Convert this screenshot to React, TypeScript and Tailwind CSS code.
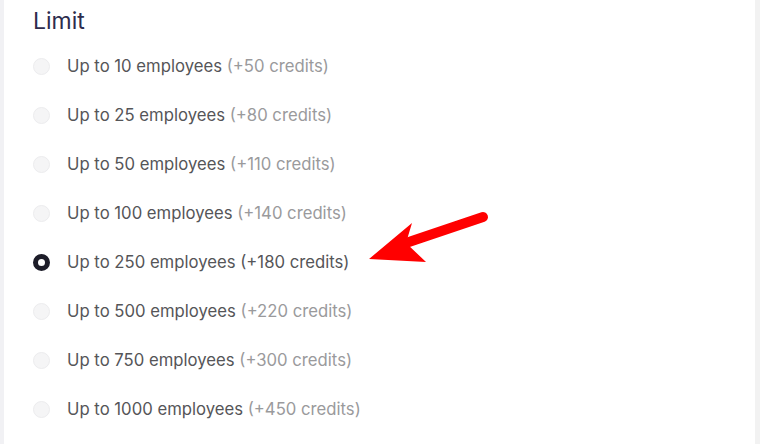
import React from "react";

const options = [
  { n: "10", c: "+50" },
  { n: "25", c: "+80" },
  { n: "50", c: "+110" },
  { n: "100", c: "+140" },
  { n: "250", c: "+180" },
  { n: "500", c: "+220" },
  { n: "750", c: "+300" },
  { n: "1000", c: "+450" },
];

const selected = "250";

export default function App() {
  return (
    <div className="relative flex h-[444px] w-[760px] overflow-hidden bg-white [font-family:Inter,'Noto_Sans',sans-serif]">
      <div className="w-[4px] shrink-0 bg-[#f1f1f4]" />
      <div className="flex-1 pl-[29px] pt-[6px]">
        <h2 className="text-[23px] leading-[30px] text-[#2e2c4d]">Limit</h2>
        <ul className="mt-[6px]">
          {options.map((o) => {
            const on = o.n === selected;
            return (
              <li key={o.n} className="flex h-[49px] items-center">
                {on ? (
                  <span className="h-[17px] w-[17px] shrink-0 rounded-full border-[5px] border-[#1d1d29] bg-white" />
                ) : (
                  <span className="h-[17px] w-[17px] shrink-0 rounded-full border border-[#ececee] bg-[#f5f5f6]" />
                )}
                <span className="ml-[17px] text-[16.7px] text-[#555558]">
                  Up to {o.n} employees{" "}
                  <span className={on ? "text-[#555558]" : "text-[#9a9a9c]"}>({o.c} credits)</span>
                </span>
              </li>
            );
          })}
        </ul>
      </div>
      <div className="w-[5px] shrink-0 bg-[#f2f2f2]" />
      <svg className="absolute left-0 top-0" width="760" height="444" viewBox="0 0 760 444">
        <line x1="483" y1="217" x2="400" y2="245" stroke="#ff0000" strokeWidth="10" strokeLinecap="round" />
        <polygon points="369,259 412,223 406,243 426,262" fill="#ff0000" />
      </svg>
    </div>
  );
}
